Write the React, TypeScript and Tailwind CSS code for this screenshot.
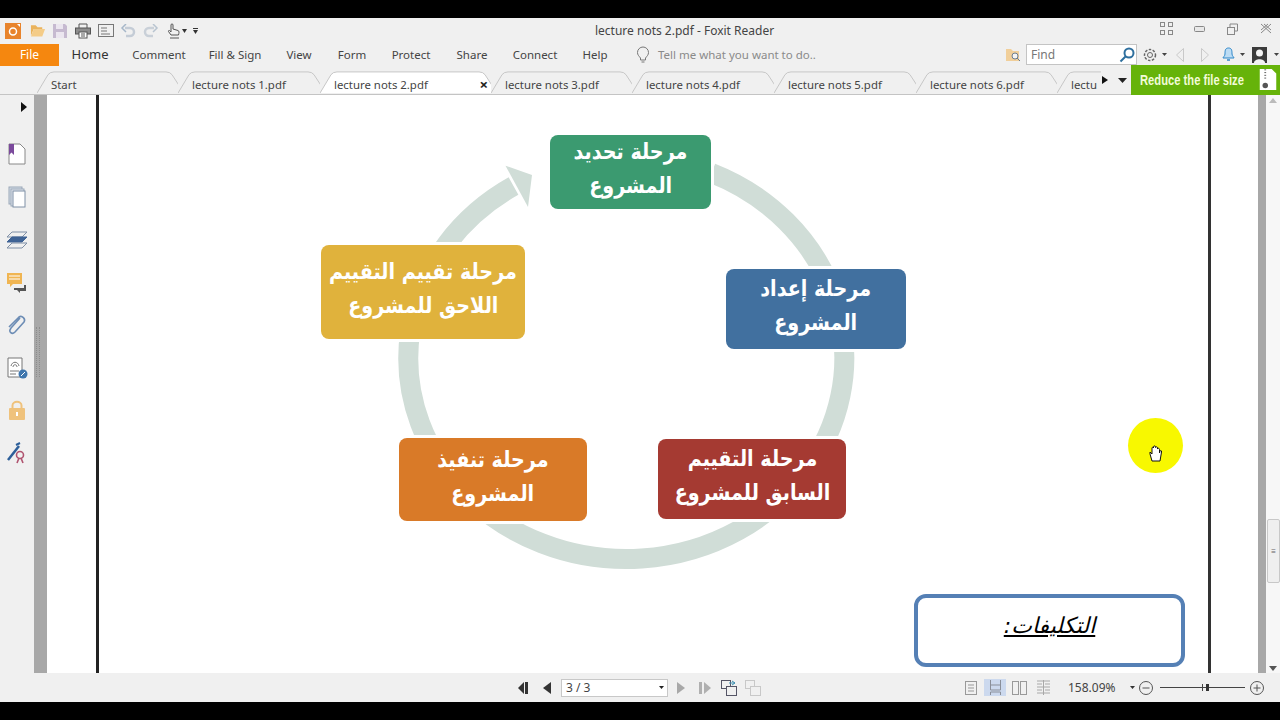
import type { ReactNode } from "react";

const uiFont = "font-['Noto_Sans','Liberation_Sans',sans-serif]";
const arabicFont = "font-['DejaVu_Sans',sans-serif]";

const menus: [string, string][] = [
  ["Comment", "w-[76px]"],
  ["Fill & Sign", "w-[76px]"],
  ["View", "w-[52px]"],
  ["Form", "w-[54px]"],
  ["Protect", "w-[64px]"],
  ["Share", "w-[58px]"],
  ["Connect", "w-[68px]"],
  ["Help", "w-[52px]"],
];

function Tab({ label, active, width }: { label: string; active?: boolean; width: number }) {
  return (
    <div className="relative h-full shrink-0" style={{ width }}>
      <svg className="absolute inset-0 h-full w-full" viewBox={`0 0 ${width} 25`} preserveAspectRatio="none">
        <path
          d={`M0 24 L11 4 Q13 1 17 1 L${width - 12} 1 Q${width - 8} 1 ${width - 6} 4 L${width + 6} 24`}
          fill={active ? "#ffffff" : "#f0f0f0"}
          stroke="#c4c4c4"
        />
      </svg>
      <span className="absolute left-[14px] top-[6px] text-[11.4px] leading-[16px] text-[#444]">{label}</span>
      {active && <span className="absolute right-[3px] top-[5px] text-[15px] leading-[16px] font-bold text-[#222]">×</span>}
    </div>
  );
}

function SideIcon({ children }: { children: ReactNode }) {
  return <div className="flex h-[42.7px] items-center justify-center">{children}</div>;
}

function Sidebar() {
  return (
    <div className="flex w-[34px] shrink-0 flex-col items-center bg-[#f0f0f0]">
      <svg width="8" height="10" viewBox="0 0 8 10" className="mt-[7px] ml-[14px] shrink-0"><path d="M1 0 L7 5 L1 10Z" fill="#111" /></svg>
      <div className="mt-[21px] flex flex-col">
        <SideIcon>
          <svg width="18" height="22" viewBox="0 0 18 22"><path d="M1 1H12L17 6V21H1Z" fill="#fff" stroke="#888" /><path d="M1 1H6V12L3.5 9.5L1 12Z" fill="#7b4a9c" /></svg>
        </SideIcon>
        <SideIcon>
          <svg width="18" height="22" viewBox="0 0 18 22"><rect x="1" y="1" width="13" height="17" fill="#d5dce6" stroke="#9aa7b8" /><rect x="3" y="3" width="13" height="17" fill="#e4e9f0" stroke="#9aa7b8" /><rect x="5" y="5" width="12" height="16" fill="#fff" stroke="#7f90a6" /></svg>
        </SideIcon>
        <SideIcon>
          <svg width="22" height="20" viewBox="0 0 22 20" fill="none"><path d="M6 2H21L16 7H1Z" stroke="#7f8fa6" /><path d="M6 7H21L16 12H1Z" fill="#3f6395" stroke="#3f6395" /><path d="M6 13H21L16 18H1Z" stroke="#7f8fa6" /></svg>
        </SideIcon>
        <SideIcon>
          <svg width="22" height="21" viewBox="0 0 22 21"><path d="M1 1H16V12H7L4 15V12H1Z" fill="#f0b552" /><path d="M3 4H14M3 7H14" stroke="#fff" /><path d="M8 16H18V13H20V19H14V21L11 18H8Z" fill="#555" /></svg>
        </SideIcon>
        <SideIcon>
          <svg width="20" height="22" viewBox="0 0 20 22" fill="none"><path d="M14 4L5 14C2 18 6 21 9 18L18 8C20 5 16 1 13 3L3 13" stroke="#6d8db5" strokeWidth="1.6" transform="translate(-1 0)" /></svg>
        </SideIcon>
        <SideIcon>
          <svg width="21" height="22" viewBox="0 0 21 22"><path d="M1 1H15V20H1Z" fill="#fff" stroke="#777" /><path d="M4 9C5 4 11 4 12 9M6 10C6 7 10 7 10 10M3 14H12M3 17H9" fill="none" stroke="#777" /><circle cx="16" cy="17" r="4.5" fill="#3f76ad" /><path d="M14 19L18 15" stroke="#fff" /></svg>
        </SideIcon>
        <SideIcon>
          <svg width="18" height="22" viewBox="0 0 18 22"><path d="M4.5 10V6.5C4.5 1.5 13.5 1.5 13.5 6.5V10" fill="none" stroke="#efc27c" strokeWidth="2" /><rect x="1" y="9" width="16" height="12" rx="1" fill="#efc27c" /><rect x="8" y="13" width="2" height="4" fill="#fff" /></svg>
        </SideIcon>
        <SideIcon>
          <svg width="20" height="22" viewBox="0 0 20 22"><path d="M1 18L12 4" stroke="#2d5f9a" strokeWidth="2.5" /><path d="M9 3L13 1" stroke="#2d5f9a" strokeWidth="2" /><circle cx="13" cy="13" r="3.5" fill="none" stroke="#b05470" strokeWidth="1.6" /><path d="M10 21L12 16M16 21L14 16" stroke="#b05470" strokeWidth="1.6" /></svg>
        </SideIcon>
      </div>
    </div>
  );
}

// boxes in the cycle diagram, placed on the page canvas
function StepBox({ className, first, second }: { className: string; first: string; second: string }) {
  return (
    <div dir="rtl" className={`absolute flex flex-col items-center justify-center rounded-[8px] pb-[6px] text-center text-white ring-[3px] ring-white ${arabicFont} ${className}`}>
      <span className="scale-x-[0.87] text-[22px] leading-[34px] font-bold whitespace-nowrap">{first}</span>
      <span className="scale-x-[0.87] text-[22px] leading-[34px] font-bold whitespace-nowrap">{second}</span>
    </div>
  );
}

function Diagram() {
  return (
    <div className="relative h-[578px] flex-1 overflow-hidden bg-white">
      <div className="absolute inset-y-0 left-[49px] w-[3px] bg-[#222]" />
      <div className="absolute inset-y-0 left-[1161px] w-[3px] bg-[#333]" />
      <svg className="absolute left-0 top-0" width="1211" height="578" viewBox="0 0 1211 578">
        <path d="M664.500 78 A218 201 0 1 1 466.500 91" fill="none" stroke="#d0ddd7" strokeWidth="20" />
        <path d="M458.500 70.700 L485 80 L481 112Z" fill="#d0ddd7" />
      </svg>
      <StepBox className="left-[503px] top-[40px] h-[74px] w-[161px] bg-[#3b9a70]" first="مرحلة تحديد" second="المشروع" />
      <StepBox className="left-[679px] top-[174px] h-[80px] w-[180px] bg-[#41709f]" first="مرحلة إعداد" second="المشروع" />
      <StepBox className="left-[611px] top-[344px] h-[80px] w-[188px] bg-[#a53a32]" first="مرحلة التقييم" second="السابق للمشروع" />
      <StepBox className="left-[352px] top-[343px] h-[83px] w-[188px] bg-[#d97a28]" first="مرحلة تنفيذ" second="المشروع" />
      <StepBox className="left-[274px] top-[150px] h-[94px] w-[204px] bg-[#e0b23c]" first="مرحلة تقييم التقييم" second="اللاحق للمشروع" />

      <div dir="rtl" className={`absolute left-[867px] top-[499px] flex h-[73px] w-[271px] items-center justify-center rounded-[12px] border-[4px] border-[#5580b5] bg-white pb-[10px] text-[22px] text-black italic underline ${arabicFont}`}>
        التكليفات:
      </div>

      {/* cursor highlight */}
      <div className="absolute left-[1081px] top-[323px] flex h-[55px] w-[55px] items-center justify-center rounded-full bg-[#f8f800]">
        <svg width="14" height="17" viewBox="0 0 14 17" className="mt-[16px]"><path d="M3 16L1 9V7L3 9V3C3 2 4.500 2 4.500 3V2C4.500 0.500 6.500 0.500 6.500 2V2.500C6.500 1.500 8.500 1.500 8.500 3V4C8.500 3 10.500 3 10.500 4.500V8L11 6C11.500 5 13 5.500 12.500 7L11 16Z" fill="#fff" stroke="#111" strokeWidth="1" /></svg>
      </div>
    </div>
  );
}

function Scrollbar() {
  return (
    <div className="flex w-[22px] shrink-0 bg-white">
      <div className="w-[8px] bg-[#a8a8a8]" />
      <div className="relative flex-1 bg-[#f7f7f7]">
        <svg className="absolute top-[3px] left-[3px]" width="8" height="5" viewBox="0 0 8 5"><path d="M0 5H8L4 0Z" fill="#bbb" /></svg>
        <div className="absolute top-[424px] left-[1px] flex h-[64px] w-[13px] items-center justify-center rounded-[2px] border border-[#c8c8c8] bg-[#efefef] text-[8px] text-[#666]">≡</div>
        <svg className="absolute bottom-[2px] left-[3px]" width="8" height="5" viewBox="0 0 8 5"><path d="M0 0H8L4 5Z" fill="#555" /></svg>
      </div>
    </div>
  );
}

export default function App() {
  return (
    <div className={`relative flex h-[720px] w-[1280px] flex-col overflow-hidden bg-black ${uiFont}`}>
      <div className="h-[18px] shrink-0 bg-black" />

      {/* quick access + title */}
      <div className="relative flex h-[25px] shrink-0 items-center bg-[#f0f0f0] pl-[5px]">
        <svg width="16" height="16" viewBox="0 0 16 16"><rect width="16" height="16" fill="#e8842c" /><circle cx="8" cy="8.500" r="3.500" fill="none" stroke="#fff" strokeWidth="1.500" /><path d="M12 1H15V4" fill="#fff" /></svg>
        <svg className="ml-[9px]" width="16" height="15" viewBox="0 0 17 15"><path d="M1 2H6L8 4H13V6H4L1 13Z" fill="#eab35c" /><path d="M4 6H16L13 14H1Z" fill="#f4cc88" /></svg>
        <svg className="ml-[7px]" width="14" height="14" viewBox="0 0 14 14"><path d="M0 0H12L14 2V14H0Z" fill="#c6bad0" /><rect x="3" y="0" width="7" height="5" fill="#ebe6ef" /><rect x="3" y="8" width="8" height="6" fill="#ebe6ef" /></svg>
        <svg className="ml-[8px]" width="16" height="16" viewBox="0 0 16 16" fill="none" stroke="#555"><path d="M4 5V1H12V5" /><rect x="0.500" y="5" width="15" height="6" fill="#8d8d8d" /><rect x="4" y="9" width="8" height="6" fill="#fff" /><path d="M6 11H10M6 13H10" /></svg>
        <svg className="ml-[7px]" width="16" height="13" viewBox="0 0 16 13" fill="none" stroke="#777"><rect x="0.500" y="0.500" width="15" height="12" /><path d="M3 4H9M3 7H9M3 10H12" /></svg>
        <svg className="ml-[6px]" width="16" height="14" viewBox="0 0 16 14" fill="none" stroke="#c4ccd6" strokeWidth="2.500"><path d="M5 4H10A4 4 0 0 1 10 12H6" /><path d="M6 0L2 4L6 8" stroke="#a6b7c9" strokeWidth="1.500" /></svg>
        <svg className="ml-[7px]" width="16" height="14" viewBox="0 0 16 14" fill="none" stroke="#c9d0d8" strokeWidth="2.500"><path d="M11 4H6A4 4 0 0 0 6 12H10" /><path d="M10 0L14 4L10 8" stroke="#b8c4d0" strokeWidth="1.500" /></svg>
        <svg className="ml-[7px]" width="15" height="16" viewBox="0 0 15 16" fill="none" stroke="#555"><path d="M5 9V2C5 0.500 7 0.500 7 2V6L12 7.500C13.500 8 13 10 12.500 12H5L2.500 8.500C2 7.500 3.500 7 4 8Z" /><path d="M4 15H13" /></svg>
        <svg className="ml-[1px]" width="5" height="4" viewBox="0 0 5 4"><path d="M0 0H5L2.500 4Z" fill="#333" /></svg>
        <svg className="ml-[6px]" width="5" height="6" viewBox="0 0 5 6"><path d="M0 0H5V1H0ZM0 2H5L2.500 6Z" fill="#333" /></svg>
        <span className="absolute left-[595px] top-[5px] text-[12px] leading-[16px] text-[#444]">lecture nots 2.pdf - Foxit Reader</span>

        <div className="mb-[4px] ml-auto flex items-center pr-[8px]">
          <svg width="13" height="13" viewBox="0 0 13 13" fill="none" stroke="#888"><rect x="0.500" y="0.500" width="4" height="4" /><rect x="8.500" y="0.500" width="4" height="4" /><rect x="0.500" y="8.500" width="4" height="4" /><rect x="8.500" y="8.500" width="4" height="4" /></svg>
          <svg className="ml-[21px]" width="11" height="6" viewBox="0 0 11 6" fill="#e8e8e8" stroke="#888"><rect x="0.500" y="0.500" width="10" height="5" rx="1" /></svg>
          <svg className="ml-[22px]" width="11" height="12" viewBox="0 0 11 12" fill="none" stroke="#888"><rect x="0.500" y="4.500" width="7" height="7" /><path d="M3 4V1H10.500V8H8" /></svg>
          <svg className="ml-[22px]" width="12" height="11" viewBox="0 0 12 11" fill="none" stroke="#888"><path d="M1 1L11 10M11 1L1 10M4 1L11 7M8 1L1 7" /></svg>
        </div>
      </div>

      {/* ribbon menu */}
      <div className="relative flex h-[28px] shrink-0 items-center bg-[#f0f0f0] pb-[5px]">
        <div className="flex h-[22px] w-[59px] items-center justify-center bg-[#f5870f] text-[12px] text-white">File</div>
        <div className="w-[62px] text-center text-[13px] text-[#333]">Home</div>
        {menus.map(([name, w]) => (
          <div key={name} className={`${w} text-center text-[11.5px] text-[#444]`}>{name}</div>
        ))}
        <svg className="ml-[15px]" width="14" height="17" viewBox="0 0 14 17" fill="none" stroke="#777"><path d="M4.500 12C3 10 1.500 9 1.500 6.500A5.500 5.500 0 0 1 12.500 6.500C12.500 9 11 10 9.500 12V14H4.500Z" /><path d="M5.500 16H8.500" /></svg>
        <span className="ml-[8px] text-[11.5px] text-[#8a8a8a]">Tell me what you want to do..</span>

        <div className="ml-auto flex items-center pr-[1px]">
          <svg width="16" height="14" viewBox="0 0 16 14"><path d="M1 1H6L8 3H14V13H1Z" fill="#f1cf9a" /><circle cx="10" cy="8" r="3" fill="#f4f4f4" stroke="#6d7f91" /><path d="M12 10L15 13" stroke="#6d7f91" /></svg>
          <div className="ml-[5px] flex h-[21px] w-[111px] items-center justify-between border border-[#c4c4c4] bg-white pl-[4px] pr-[1px] text-[12px] text-[#777]">
            Find
            <svg width="16" height="16" viewBox="0 0 16 16" fill="none" stroke="#2e6f9e" strokeWidth="2"><circle cx="10" cy="6" r="4.500" /><path d="M6.500 9.500L1.500 14.500" /></svg>
          </div>
          <svg className="ml-[6px]" width="14" height="14" viewBox="0 0 14 14" fill="none" stroke="#666"><circle cx="7" cy="7" r="2.500" /><circle cx="7" cy="7" r="5.500" strokeDasharray="2.500 1.500" strokeWidth="1.500" /></svg>
          <svg className="ml-[5px]" width="5" height="3" viewBox="0 0 5 3"><path d="M0 0H5L2.500 3Z" fill="#444" /></svg>
          <svg className="ml-[9px]" width="8" height="14" viewBox="0 0 8 14"><path d="M7.500 0.500V13.500L0.500 7Z" fill="none" stroke="#c9c9c9" /></svg>
          <svg className="ml-[17px]" width="8" height="14" viewBox="0 0 8 14"><path d="M0.500 0.500V13.500L7.500 7Z" fill="none" stroke="#c9c9c9" /></svg>
          <svg className="ml-[13px]" width="13" height="15" viewBox="0 0 13 15"><path d="M6.500 1C10 1 10 4 10 7C10 9 12 10 12 11H1C1 10 3 9 3 7C3 4 3 1 6.500 1Z" fill="#bcdcf4" stroke="#2c86c9" /><path d="M5 13H8" stroke="#2c86c9" strokeWidth="1.500" /></svg>
          <svg className="ml-[5px]" width="5" height="3" viewBox="0 0 5 3"><path d="M0 0H5L2.500 3Z" fill="#444" /></svg>
          <svg className="ml-[7px]" width="15" height="16" viewBox="0 0 15 16"><rect width="15" height="16" fill="#3b3b3b" /><circle cx="7.500" cy="6" r="3.500" fill="#f4f4f4" /><path d="M2 16C2 11 13 11 13 16Z" fill="#f4f4f4" /></svg>
          <svg className="ml-[7px]" width="5" height="3" viewBox="0 0 5 3"><path d="M0 0H5L2.500 3Z" fill="#444" /></svg>
        </div>
      </div>

      {/* tabs */}
      <div className="relative flex h-[24px] shrink-0 border-b border-[#c4c4c4] bg-[#f0f0f0] pl-[37px]">
        <Tab label="Start" width={141} />
        <Tab label="lecture nots 1.pdf" width={142} />
        <Tab label="lecture nots 2.pdf" active width={171} />
        <Tab label="lecture nots 3.pdf" width={141} />
        <Tab label="lecture nots 4.pdf" width={142} />
        <Tab label="lecture nots 5.pdf" width={142} />
        <Tab label="lecture nots 6.pdf" width={141} />
        <div className="relative w-[44px] shrink-0 overflow-hidden">
          <Tab label="lectu" width={142} />
        </div>
        <svg className="ml-[1px] mt-[5px]" width="6" height="8" viewBox="0 0 6 8"><path d="M0 0L6 4L0 8Z" fill="#111" /></svg>
        <svg className="ml-[10px] mt-[7px]" width="9" height="5" viewBox="0 0 9 5"><path d="M0 0H9L4.500 5Z" fill="#222" /></svg>
      </div>

      {/* green upsell button sits over the ribbon edge */}
      <div className="absolute left-[1131px] top-[65px] flex h-[30px] w-[149px] items-center overflow-hidden bg-[#66b30a] pl-[9px]">
        <span className="origin-left scale-x-[0.8] text-[14px] font-['Liberation_Sans',sans-serif] font-bold whitespace-nowrap text-[#f2fbd8]">Reduce the file size</span>
        <svg className="absolute left-[128px] top-[3px]" width="18" height="22" viewBox="0 0 18 24"><path d="M0 1H13L18 6V24H0Z" fill="#fff" /><path d="M5 2H7M5 5H7M5 8H7M5 11H7" stroke="#555" /><circle cx="6" cy="19" r="3" fill="#555" /></svg>
      </div>

      {/* document area */}
      <div className="flex h-[578px] shrink-0 bg-white">
        <Sidebar />
        <div className="relative w-[13px] shrink-0 bg-[#a8a8a8]">
          <div className="absolute left-[2px] top-[232px] h-[50px] w-[4px] border-x border-dotted border-[#8c8c8c]" />
        </div>
        <Diagram />
        <Scrollbar />
      </div>

      {/* status bar */}
      <div className="relative flex h-[29px] shrink-0 items-center bg-[#f0f0f0]">
        <div className="flex items-center pl-[518px]">
          <svg width="12" height="12" viewBox="0 0 12 12" fill="#333"><path d="M0 6L6 0V12Z" /><rect x="7" y="0" width="3" height="12" /></svg>
          <svg className="ml-[13px]" width="8" height="12" viewBox="0 0 8 12" fill="#333"><path d="M8 0V12L0 6Z" /></svg>
          <div className="ml-[10px] flex h-[18px] w-[107px] items-center justify-between border border-[#c8c8c8] bg-white pl-[4px] pr-[3px] text-[12px] text-[#444]">
            3 / 3
            <svg width="5" height="3" viewBox="0 0 5 3"><path d="M0 0H5L2.500 3Z" fill="#222" /></svg>
          </div>
          <svg className="ml-[9px]" width="8" height="12" viewBox="0 0 8 12" fill="#a8a8a8"><path d="M0 0V12L8 6Z" /></svg>
          <svg className="ml-[14px]" width="12" height="12" viewBox="0 0 12 12" fill="#b0b0b0"><rect x="0" y="0" width="3" height="12" /><path d="M5 0L12 6L5 12Z" /></svg>
          <svg className="ml-[10px]" width="16" height="16" viewBox="0 0 16 16" fill="none" stroke="#556"><rect x="0.500" y="0.500" width="9" height="8" /><rect x="5.500" y="6.500" width="10" height="9" fill="#f0f0f0" /><path d="M8 3H14M11 1L14 3L11 5" stroke="#3d8fb0" /></svg>
          <svg className="ml-[8px]" width="16" height="16" viewBox="0 0 16 16" fill="none" stroke="#c8c8c8"><rect x="0.500" y="0.500" width="9" height="8" /><rect x="5.500" y="6.500" width="10" height="9" fill="#f0f0f0" /></svg>
        </div>
        <div className="ml-auto flex items-center pr-[16px]">
          <svg width="12" height="14" viewBox="0 0 12 14" fill="none" stroke="#999"><rect x="0.500" y="0.500" width="11" height="13" /><path d="M3 4H9M3 7H9M3 10H9" /></svg>
          <div className="ml-[7px] flex h-[17px] w-[22px] items-center justify-center bg-[#ccd9ee]">
            <svg width="13" height="15" viewBox="0 0 13 15" fill="none" stroke="#8a8f99"><path d="M1.500 0V10H11.500V0M1.500 5H11.500M1.500 15V12H11.500V15" /></svg>
          </div>
          <svg className="ml-[6px]" width="15" height="14" viewBox="0 0 15 14" fill="none" stroke="#999"><rect x="0.500" y="0.500" width="6" height="13" /><rect x="8.500" y="0.500" width="6" height="13" /></svg>
          <svg className="ml-[9px]" width="15" height="15" viewBox="0 0 15 15" fill="none" stroke="#a8a8a8"><path d="M1 1H14M1 4H6M9 4H14M1 7H14M1 10H6M9 10H14M1 13H14M7.500 0V15" /></svg>
          <span className="ml-[17px] w-[55px] text-[12px] text-[#444]">158.09%</span>
          <svg className="ml-[7px]" width="5" height="3" viewBox="0 0 5 3"><path d="M0 0H5L2.500 3Z" fill="#333" /></svg>
          <svg className="ml-[4px]" width="14" height="14" viewBox="0 0 14 14" fill="none" stroke="#555"><circle cx="7" cy="7" r="6.500" /><path d="M3.500 7H10.500" /></svg>
          <div className="relative ml-[7px] h-[1px] w-[85px] bg-[#444]">
            <div className="absolute left-[42px] top-[-3px] h-[7px] w-[1px] bg-[#444]" />
            <div className="absolute left-[46px] top-[-3px] h-[7px] w-[3px] bg-[#333]" />
          </div>
          <svg className="ml-[5px]" width="14" height="14" viewBox="0 0 14 14" fill="none" stroke="#555"><circle cx="7" cy="7" r="6.500" /><path d="M3.500 7H10.500M7 3.500V10.500" /></svg>
        </div>
      </div>

      <div className="flex-1 bg-black" />
    </div>
  );
}
